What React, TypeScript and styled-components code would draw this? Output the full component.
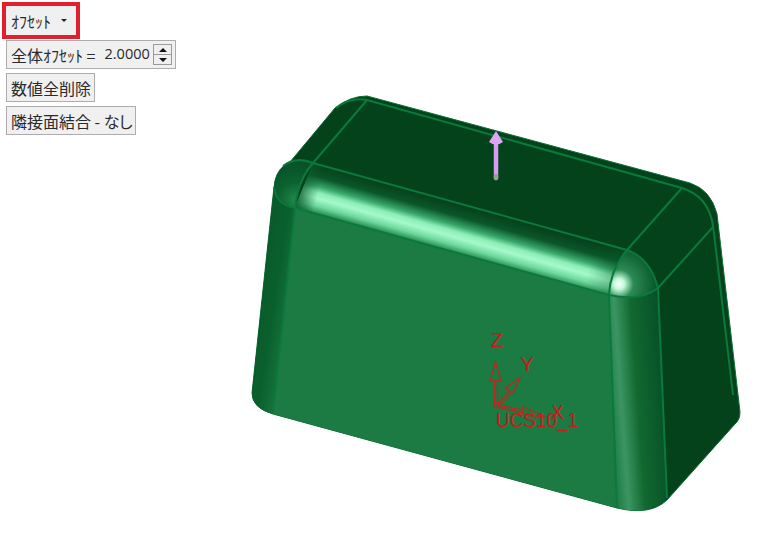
import styled, { createGlobalStyle } from 'styled-components';

const GlobalStyle = createGlobalStyle`
  html, body {
    margin: 0;
    padding: 0;
    background: #fff;
  }
`;

const FONT = `"Noto Sans CJK JP", "Noto Sans", sans-serif`;

const App = () => {
  return (
    <>
      <GlobalStyle />
      <Page>
        <Viewport>
          <ModelDrawing />
        </Viewport>
        <Panel>
          <MenuButton>
            <HalfWidth>ｵﾌｾｯﾄ</HalfWidth>
            <Caret />
          </MenuButton>
          <SpinRow>
            <span>全体<HalfWidth>ｵﾌｾｯﾄ</HalfWidth> =</span>
            <SpinValue>2.0000</SpinValue>
            <Spinner>
              <SpinPart><SpinUp /></SpinPart>
              <SpinPart><SpinDown /></SpinPart>
            </Spinner>
          </SpinRow>
          <PlainButton>数値全削除</PlainButton>
          <PlainButton>隣接面結合&nbsp;-&nbsp;<Kana>なし</Kana></PlainButton>
        </Panel>
      </Page>
    </>
  );
};

export default App;

const ModelDrawing = () => (
  <svg width="760" height="538" viewBox="0 0 760 538">
    <defs>
      <linearGradient id="ramp" gradientUnits="userSpaceOnUse" x1="400" y1="187" x2="387" y2="233">
        <stop offset="0" stopColor="#053f1c" />
        <stop offset="0.26" stopColor="#0a5629" />
        <stop offset="0.46" stopColor="#3aa86c" />
        <stop offset="0.58" stopColor="#8ceeb6" />
        <stop offset="0.7" stopColor="#a6f9ca" />
        <stop offset="0.86" stopColor="#6cd89c" />
        <stop offset="1" stopColor="#2a8c52" />
      </linearGradient>
      <linearGradient id="rampFadeL" gradientUnits="userSpaceOnUse" x1="298" y1="182" x2="320" y2="188">
        <stop offset="0" stopColor="#0a5a2b" stopOpacity="1" />
        <stop offset="1" stopColor="#0a5a2b" stopOpacity="0" />
      </linearGradient>
      <linearGradient id="rampFadeR" gradientUnits="userSpaceOnUse" x1="590" y1="265" x2="620" y2="274">
        <stop offset="0" stopColor="#0a5a2b" stopOpacity="0" />
        <stop offset="1" stopColor="#0a5a2b" stopOpacity="0.4" />
      </linearGradient>
      <linearGradient id="leftStrip" gradientUnits="userSpaceOnUse" x1="258" y1="300" x2="290" y2="305">
        <stop offset="0" stopColor="#0a5a2a" />
        <stop offset="0.5" stopColor="#09602d" />
        <stop offset="1" stopColor="#177239" />
      </linearGradient>
      <linearGradient id="rightStrip" gradientUnits="userSpaceOnUse" x1="610" y1="400" x2="665" y2="396">
        <stop offset="0" stopColor="#1f7d46" />
        <stop offset="0.2" stopColor="#3b9563" />
        <stop offset="0.5" stopColor="#12692f" />
        <stop offset="1" stopColor="#06502a" />
      </linearGradient>
      <radialGradient id="cornerR" gradientUnits="userSpaceOnUse" cx="619" cy="284" r="38">
        <stop offset="0" stopColor="#ffffff" />
        <stop offset="0.14" stopColor="#c4fadb" />
        <stop offset="0.38" stopColor="#2c8a54" />
        <stop offset="1" stopColor="#07562a" />
      </radialGradient>
      <radialGradient id="cornerL" gradientUnits="userSpaceOnUse" cx="296" cy="200" r="36">
        <stop offset="0" stopColor="#1f8a4c" />
        <stop offset="0.5" stopColor="#0c622f" />
        <stop offset="1" stopColor="#07522a" />
      </radialGradient>
    </defs>

    {/* silhouette / dark faces */}
    <path
      d="M367 96 L690 183 Q711 190 717 214 L740 412 Q740 420 735 424 L667 500 Q650 516 617 508 L273 414 Q252 408 252 393 L274 187 Q276 170 290 162 L335 108 Q350 96 367 96 Z"
      fill="#03421b"
      stroke="#0a7038"
      strokeWidth="1"
    />

    {/* front face */}
    <path d="M295 208 L609 295 L617 508 L273 414 Z" fill="#1c7a43" />
    <path d="M274 187 Q276 205 295 208 L273 414 Q252 408 252 393 Z" fill="url(#leftStrip)" />
    <path d="M609 295 Q640 302 658 288 L667 499 Q650 516 617 508 Z" fill="url(#rightStrip)" />

    {/* top ramp */}
    <path d="M313 163 L627 250 L609 295 L295 208 Z" fill="url(#ramp)" />
    <path d="M313 163 L627 250 L609 295 L295 208 Z" fill="url(#rampFadeL)" />
    <path d="M313 163 L627 250 L609 295 L295 208 Z" fill="url(#rampFadeR)" />

    {/* rounded corners */}
    <path d="M313 163 Q296 156 283 166 Q274 174 274 187 Q276 205 295 208 Q298 180 313 163 Z" fill="url(#cornerL)" />
    <path d="M627 250 Q650 258 658 288 Q640 302 609 295 Q610 270 627 250 Z" fill="url(#cornerR)" />

    {/* edge lines */}
    <g fill="none" stroke="#0a7a3c" strokeWidth="2">
      <path d="M367 100 L682 188 Q708 196 713 225" />
      <path d="M367 100 Q350 97 336 108" />
      <path d="M367 100 L313 163 Q298 180 295 208 L273 412" />
      <path d="M283 166 Q296 156 313 163 L627 250 Q650 258 658 288 L667 498" />
      <path d="M274 187 Q276 205 295 208 L609 295 Q640 302 658 288" />
      <path d="M682 188 L627 250 Q610 270 609 295 L617 508" />
      <path d="M713 227 L658 288" />
      <path d="M713 225 L733 395" />
    </g>

    {/* pull arrow */}
    <path d="M496 142 L496 178" stroke="#d79cf2" strokeWidth="4.5" strokeLinecap="round" />
    <path d="M496 178 L496 176" stroke="#9a9f9c" strokeWidth="4.5" strokeLinecap="round" />
    <path d="M496 131 L503 142 Q496 147 489 142 Z" fill="#e0a4f6" />

    {/* coordinate system */}
    <g fill="none" stroke="#b92a1c" strokeWidth="1.3">
      <path d="M494.5 405 L494.5 381 M497.5 405 L497.5 381" />
      <path d="M490 381 L501 381 L495.5 362 Z" />
      <path d="M497 404 L509 391 M499 406 L511 393" />
      <path d="M505 388 L513 393 L520 378 Z" />
      <path d="M497 405 L523 410 M497 407 L523 413" />
      <path d="M523 407 L523 415 L545 417 Z" />
      <circle cx="496" cy="405" r="2.5" />
    </g>
    <Axis x="491" y="347" textLength={12} lengthAdjust="spacingAndGlyphs">Z</Axis>
    <Axis x="520" y="371" textLength={14} lengthAdjust="spacingAndGlyphs">Y</Axis>
    <Axis x="551" y="419" textLength={13} lengthAdjust="spacingAndGlyphs">X</Axis>
    <Axis x="496" y="427" textLength={82} lengthAdjust="spacingAndGlyphs">UCS10_1</Axis>
  </svg>
);

const Page = styled.div`
  display: grid;
  width: 760px;
  height: 538px;
  overflow: hidden;
  background: #fff;
`;

const Viewport = styled.div`
  grid-area: 1 / 1;
  line-height: 0;
`;

const Panel = styled.div`
  grid-area: 1 / 1;
  display: flex;
  flex-direction: column;
  align-items: flex-start;
  gap: 4px;
  padding: 2px 0 0 6px;
  font-family: ${FONT};
  color: #2a2a2a;
`;

const HalfWidth = styled.span`
  display: inline-block;
  font-size: 16px;
`;

const Kana = styled.span`
  font-feature-settings: "palt";
  letter-spacing: -0.5px;
`;

const Control = styled.div`
  box-sizing: border-box;
  display: flex;
  align-items: center;
  background: #f0f0f0;
  border: 1px solid #adadad;
  font-size: 16px;
  line-height: 1;
  white-space: nowrap;
`;

const MenuButton = styled(Control)`
  width: 78px;
  height: 37px;
  margin: 0 0 -3px -4px;
  padding-left: 5px;
  border: 4px solid #e21f2d;
`;

const Caret = styled.span`
  width: 0;
  height: 0;
  margin-left: 10px;
  border-left: 3px solid transparent;
  border-right: 3px solid transparent;
  border-top: 3px solid #222;
`;

const SpinRow = styled(Control)`
  width: 170px;
  height: 29px;
  padding: 0 3px 0 4px;
`;

const SpinValue = styled.span`
  margin-left: 9px;
  font-family: "Open Sans", sans-serif;
  font-size: 14.5px;
`;

const Spinner = styled.div`
  display: flex;
  flex-direction: column;
  margin-left: auto;
  width: 19px;
  height: 21px;
  border: 1px solid #9a9a9a;
  box-sizing: border-box;
`;

const SpinPart = styled.div`
  flex: 1;
  display: flex;
  align-items: center;
  justify-content: center;
  background: #efefef;

  & + & {
    border-top: 1px solid #9a9a9a;
  }
`;

const SpinUp = styled.span`
  width: 0;
  height: 0;
  border-left: 4px solid transparent;
  border-right: 4px solid transparent;
  border-bottom: 4px solid #111;
`;

const SpinDown = styled(SpinUp)`
  border-bottom: 0;
  border-top: 4px solid #111;
`;

const PlainButton = styled(Control)`
  height: 29px;
  padding: 0 3px 0 4px;
`;

const Axis = styled.text`
  font-family: "Liberation Sans", sans-serif;
  font-size: 20px;
  fill: #d4161a;
`;
